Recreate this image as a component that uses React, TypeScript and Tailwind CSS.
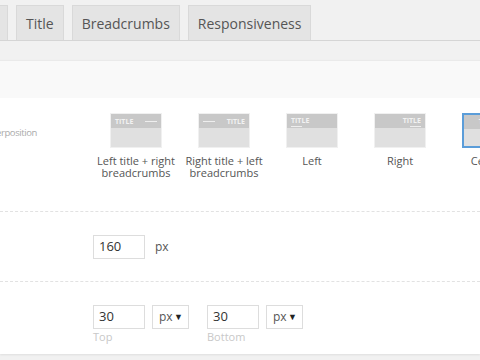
const font = { fontFamily: '"Open Sans", "Liberation Sans", sans-serif' };

type Variant = "lr" | "rl" | "left" | "right" | "center";

const Thumb = ({ variant, active }: { variant: Variant; active?: boolean }) => {
  const title = <span className="text-[7px] font-bold leading-none text-[#f2f2f2]">TITLE</span>;
  const dash = <span className="block w-[12px] h-[1px] bg-[#eeeeee]" />;
  const small = <span className="block w-[11px] h-[1px] bg-[#eeeeee] mt-[2px]" />;
  return (
    <div
      className={`w-[52px] h-[35px] flex flex-col ${
        active ? "border-2 border-[#5b9dd9]" : "border border-[#f0f0f0]"
      }`}
    >
      <div className="h-[14px] bg-[#c8c8c8] flex px-[4px]">
        {variant === "lr" && (
          <div className="flex w-full items-center justify-between">
            {title}
            {dash}
          </div>
        )}
        {variant === "rl" && (
          <div className="flex w-full items-center justify-between">
            {dash}
            {title}
          </div>
        )}
        {variant === "left" && (
          <div className="flex flex-col items-start pt-[3px]">
            {title}
            {small}
          </div>
        )}
        {variant === "right" && (
          <div className="flex w-full flex-col items-end pt-[3px]">
            {title}
            {small}
          </div>
        )}
        {variant === "center" && (
          <div className="flex w-full flex-col items-center pt-[3px]">
            {title}
            {small}
          </div>
        )}
      </div>
      <div className="flex-1 bg-[#e0e0e0]" />
    </div>
  );
};

const Option = ({ variant, label, active }: { variant: Variant; label: string; active?: boolean }) => (
  <div className="w-[88px] shrink-0 flex flex-col items-center">
    <Thumb variant={variant} active={active} />
    <div className="mt-[7px] text-[11px] leading-[12px] text-[#555] text-center whitespace-pre-line">{label}</div>
  </div>
);

const Select = () => (
  <div className="h-[24px] w-[37px] border border-[#dddddd] bg-white flex items-center justify-between pl-[6px] pr-[5px] text-[12px] text-[#555]">
    <span>px</span>
    <span className="text-[9px] text-[#222]">▼</span>
  </div>
);

const Input = ({ value }: { value: string }) => (
  <div className="h-[24px] w-[52px] border border-[#dddddd] bg-white flex items-center px-[5px] text-[13px] text-[#333]">
    {value}
  </div>
);

export default function App() {
  return (
    <div className="w-[480px] h-[360px] bg-[#f1f1f1] overflow-hidden" style={font}>
      <div className="flex items-end gap-[8px] h-[41px] pt-[5px] border-b border-[#d5d5d5]">
        <div className="w-[8px] h-[35px] bg-[#e4e4e4] border-r border-t border-[#d9d9d9]" />
        {["Title", "Breadcrumbs", "Responsiveness"].map((t) => (
          <div
            key={t}
            className="h-[35px] px-[9px] flex items-center bg-[#e4e4e4] border border-b-0 border-[#d9d9d9] text-[14px] text-[#555]"
          >
            {t}
          </div>
        ))}
      </div>
      <div className="h-[19px]" />
      <div className="bg-white shadow-[0_1px_2px_rgba(0,0,0,0.08)]">
        <div className="h-[38px] bg-[#f9f9f9] border-t border-[#eaeaea]" />
        <div className="flex h-[114px] border-b border-dashed border-[#e2e2e2]">
          <div className="w-[37px] shrink-0 flex justify-end whitespace-nowrap pt-[28px] mr-[55px] text-[9.5px] tracking-[-0.4px] text-[#aaa]">
            Title superposition
          </div>
          <div className="flex pt-[15px]">
            <Option variant="lr" label={"Left title + right\nbreadcrumbs"} />
            <Option variant="rl" label={"Right title + left\nbreadcrumbs"} />
            <Option variant="left" label="Left" />
            <Option variant="right" label="Right" />
            <Option variant="center" label="Center" active />
          </div>
        </div>
        <div className="flex items-center h-[70px] border-b border-dashed border-[#e2e2e2] pl-[93px]">
          <Input value="160" />
          <span className="ml-[10px] text-[12px] text-[#555]">px</span>
        </div>
        <div className="flex h-[72px] pl-[93px] pt-[23px] gap-[18px]">
          <div className="flex flex-col">
            <div className="flex gap-[7px]">
              <Input value="30" />
              <Select />
            </div>
            <span className="text-[11px] text-[#c8c8c8] leading-[14px] mt-[1px]">Top</span>
          </div>
          <div className="flex flex-col">
            <div className="flex gap-[7px]">
              <Input value="30" />
              <Select />
            </div>
            <span className="text-[11px] text-[#c8c8c8] leading-[14px] mt-[1px]">Bottom</span>
          </div>
        </div>
      </div>
    </div>
  );
}
